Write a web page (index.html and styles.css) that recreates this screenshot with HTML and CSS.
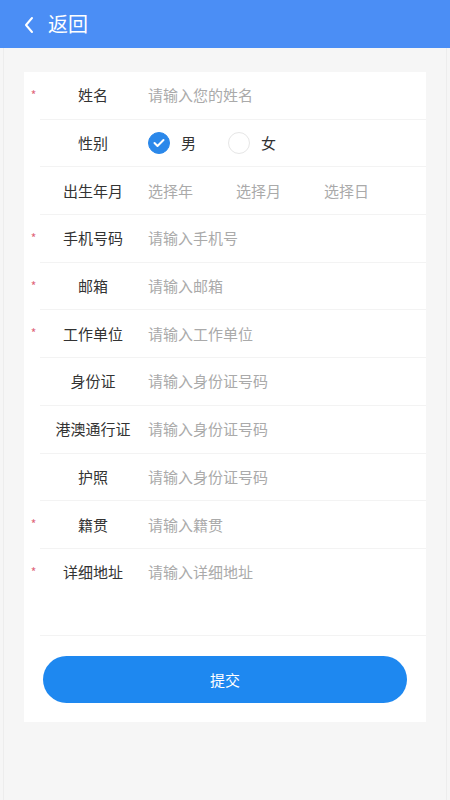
FILE: index.html
```html
<!DOCTYPE html>
<html lang="zh">
<head>
<meta charset="utf-8">
<title>表单</title>
<link rel="stylesheet" href="styles.css">
</head>
<body>
<div class="page">
  <header class="topbar">
    <svg class="back-icon" width="12" height="18" viewBox="0 0 12 18"><polyline points="8,2 2,9 8,16" fill="none" stroke="#fff" stroke-width="2" stroke-linecap="round" stroke-linejoin="round"/></svg>
    <span class="back-text">返回</span>
  </header>
  <main class="card">
    <div class="row"><span class="star">*</span><span class="label">姓名</span><span class="ph">请输入您的姓名</span></div>
    <div class="row"><span class="star"></span><span class="label">性别</span>
      <span class="radios">
        <span class="radio"><span class="dot checked"><svg width="12" height="10" viewBox="0 0 12 10"><polyline points="1.5,5 4.5,8 10.5,2" fill="none" stroke="#fff" stroke-width="2" stroke-linecap="round" stroke-linejoin="round"/></svg></span><span class="rtext">男</span></span>
        <span class="radio"><span class="dot"></span><span class="rtext">女</span></span>
      </span>
    </div>
    <div class="row"><span class="star"></span><span class="label">出生年月</span>
      <span class="dates"><span class="date ph">选择年</span><span class="date ph">选择月</span><span class="date ph">选择日</span></span>
    </div>
    <div class="row"><span class="star">*</span><span class="label">手机号码</span><span class="ph">请输入手机号</span></div>
    <div class="row"><span class="star">*</span><span class="label">邮箱</span><span class="ph">请输入邮箱</span></div>
    <div class="row"><span class="star">*</span><span class="label">工作单位</span><span class="ph">请输入工作单位</span></div>
    <div class="row"><span class="star"></span><span class="label">身份证</span><span class="ph">请输入身份证号码</span></div>
    <div class="row"><span class="star"></span><span class="label">港澳通行证</span><span class="ph">请输入身份证号码</span></div>
    <div class="row"><span class="star"></span><span class="label">护照</span><span class="ph">请输入身份证号码</span></div>
    <div class="row"><span class="star">*</span><span class="label">籍贯</span><span class="ph">请输入籍贯</span></div>
    <div class="row tall"><span class="star">*</span><span class="label">详细地址</span><span class="ph">请输入详细地址</span></div>
    <div class="btn-wrap"><button class="submit">提交</button></div>
  </main>
</div>
</body>
</html>
```
FILE: styles.css
```css
* { box-sizing: border-box; }
html, body { margin: 0; padding: 0; }
body {
  width: 450px;
  height: 800px;
  background: #f6f6f6;
  font-family: "Noto Sans CJK SC", "Noto Sans", sans-serif;
  overflow: hidden;
}
.page {
  height: 800px;
  border-left: 1px solid #ededed;
  border-right: 1px solid #ededed;
  margin: 0 3px;
}
.topbar {
  height: 48px;
  background: #4b8ef5;
  display: flex;
  align-items: center;
  padding-left: 24px;
  margin: 0 -4px;
}
.back-icon { margin-right: 12px; margin-top: 1px; }
.back-text { color: #fff; font-size: 20px; line-height: 1; }
.card {
  background: #fff;
  margin: 24px 20px 0 20px;
  padding: 0 0 19px 16px;
}
.row {
  height: 47.7px;
  border-bottom: 1px solid #f3f3f3;
  display: flex;
  align-items: center;
}
.row.tall {
  height: 87px;
  align-items: flex-start;
  padding-top: 12px;
}
.star {
  width: 16px;
  margin-left: -16px;
  color: #e0667a;
  font-size: 12px;
  text-align: center;
  align-self: flex-start;
  padding-top: 17px;
  padding-left: 3px;
  line-height: 1;
}
.row.tall .star { padding-top: 5px; }
.label {
  width: 106px;
  text-align: center;
  font-size: 15px;
  color: #333;
  line-height: 22px;
}
.ph {
  color: #aaa;
  font-size: 15px;
  line-height: 22px;
  margin-left: 2px;
}
.radios { display: flex; align-items: center; margin-left: 2px; }
.radio { display: flex; align-items: center; margin-right: 32px; }
.dot {
  width: 22px;
  height: 22px;
  border-radius: 50%;
  border: 1px solid #e6e6e6;
  display: flex;
  align-items: center;
  justify-content: center;
}
.dot.checked { background: #2b88ea; border-color: #2b88ea; }
.rtext { margin-left: 11px; font-size: 15px; color: #333; line-height: 22px; }
.dates { display: flex; margin-left: 2px; }
.date { width: 88px; margin-left: 0; }
.btn-wrap { padding: 20px 19px 0 3px; }
.submit {
  width: 100%;
  height: 47px;
  border: none;
  border-radius: 24px;
  background: #1e88f0;
  color: #fff;
  font-family: "Noto Sans CJK SC", "Noto Sans", sans-serif;
  font-size: 15px;
  display: block;
}
```
